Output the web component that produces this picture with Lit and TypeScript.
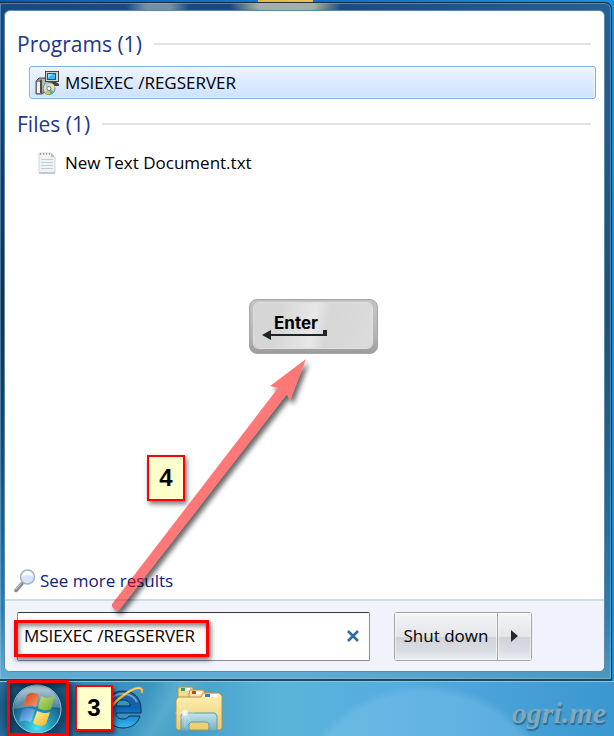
import { LitElement, html, css } from "lit";
import { customElement, property, state } from "lit/decorators.js";
import { classMap } from "lit/directives/class-map.js";

const installerIcon = html`<svg class="icon" width="24" height="24" viewBox="0 0 24 24" aria-hidden="true">
  <path d="M1 10l3-3h6v14l-3 2H1z" fill="#8c8c8c" stroke="#555" />
  <path d="M2 11h3v11H2z" fill="#f0f0f0" />
  <path d="M5 9h2v13H5z" fill="#4c4c4c" />
  <path d="M7 8h3v12H7z" fill="#b5b5b5" />
  <rect x="10.500" y=".5" width="13" height="10" fill="#d4d4cc" stroke="#43464a" />
  <rect x="12" y="2" width="9" height="7" fill="#1747b8" />
  <rect x="13" y="3" width="7" height="5" fill="#35b9f2" />
  <path d="M13 3h5l-5 4z" fill="#8be4ff" />
  <path d="M13 11h8l3 2v2h-5z" fill="#3f4348" />
  <circle cx="14" cy="17.500" r="6" fill="#d9dccb" stroke="#77797a" />
  <path d="M14 17.500l-5-3a6 6 0 0 1 4-3z" fill="#9fdcdc" />
  <path d="M14 17.500l5 3a6 6 0 0 1-4 3z" fill="#41b8bc" />
  <path d="M14 17.500l-4 4a6 6 0 0 0 4 2z" fill="#e6c233" />
  <path d="M14 17.500l3-5a6 6 0 0 1 3 4z" fill="#efe78c" />
  <circle cx="14" cy="17.500" r="2" fill="#fff" stroke="#777" />
</svg>`;

const textIcon = html`<svg class="icon" width="24" height="24" viewBox="0 0 24 24" aria-hidden="true">
  <path d="M4 2h12l4 4v16H4z" fill="#f0f2f4" stroke="#d3d6d9" />
  <path d="M16 2v4h4z" fill="#b9bdc0" />
  <path d="M6 8.500h12M6 11.500h12M6 14.500h12M6 17.500h12" stroke="#b9d0e2" />
  <path d="M5 3h10" stroke="#9b9fa2" stroke-width="2" stroke-dasharray="1 2" />
  <path d="M4 22h16" stroke="#a9adb1" />
</svg>`;

const lensIcon = html`<svg width="22" height="24" viewBox="0 0 22 24" aria-hidden="true">
  <path d="M2 21.500l6-7" stroke="#85898d" stroke-width="3.500" stroke-linecap="round" />
  <path d="M2 20.500l5-6" stroke="#d5d8dc" stroke-width="1" stroke-linecap="round" />
  <circle cx="13.500" cy="8" r="7" fill="#d3e6fb" stroke="#a9b2be" stroke-width="1.500" />
  <path d="M8 8a5.500 5.500 0 0 1 11-1c-4-1-8-1-11 1z" fill="#f6fbff" />
</svg>`;

const orbIcon = html`<svg width="52" height="52" viewBox="0 0 52 52" aria-hidden="true">
  <defs>
    <radialGradient id="orb" cx="50%" cy="88%" r="85%">
      <stop offset="0" stop-color="#4fe3ef" />
      <stop offset=".35" stop-color="#2299bd" />
      <stop offset=".7" stop-color="#1b5d85" />
      <stop offset="1" stop-color="#4a86a3" />
    </radialGradient>
    <linearGradient id="gloss" x2="0" y2="1">
      <stop offset="0" stop-color="#fff" stop-opacity=".65" />
      <stop offset="1" stop-color="#cfe6ee" stop-opacity=".25" />
    </linearGradient>
    <linearGradient id="fr" x2="1" y2="1"><stop offset="0" stop-color="#d63a12" /><stop offset="1" stop-color="#f7a06a" /></linearGradient>
    <linearGradient id="fg" x2="1" y2="1"><stop offset="0" stop-color="#c6e27a" /><stop offset="1" stop-color="#6cab2c" /></linearGradient>
    <linearGradient id="fb" x2="1" y2="1"><stop offset="0" stop-color="#2f6fc4" /><stop offset="1" stop-color="#8fd4f7" /></linearGradient>
    <linearGradient id="fy" x2="1" y2="1"><stop offset="0" stop-color="#fff0a0" /><stop offset="1" stop-color="#f3b51d" /></linearGradient>
  </defs>
  <circle cx="26" cy="26" r="25" fill="url(#orb)" stroke="#143f5c" />
  <circle cx="26" cy="26" r="24" fill="none" stroke="#a9dcea" stroke-opacity=".8" />
  <path d="M3 26a23 23 0 0 1 46-1c-16-3-31-2-46 1z" fill="url(#gloss)" />
  <path d="M16 12c4-3 8-2 12 0l-3 12c-4-2-8-2-13 0z" fill="url(#fr)" />
  <path d="M30 13c5 3 9 2 14-1l-4 14c-4 2-8 2-13-1z" fill="url(#fg)" />
  <path d="M11 27c5-3 9-2 13 0l-4 12c-4-2-8-2-12 0z" fill="url(#fb)" />
  <path d="M26 28c5 2 9 3 13 1l-4 12c-4 3-8 2-13-1z" fill="url(#fy)" />
</svg>`;

const browserIcon = html`<svg width="48" height="48" viewBox="0 0 48 48" aria-hidden="true">
  <defs>
    <linearGradient id="ie" x2="0" y2="1">
      <stop offset="0" stop-color="#2a5f9c" />
      <stop offset=".45" stop-color="#0b62b0" />
      <stop offset="1" stop-color="#35bdf2" />
    </linearGradient>
  </defs>
  <path d="M24 6C13 6 6 14 6 24.500S13 43 24 43c9 0 15-5 17-12H30c-1 2-3 3-6 3-4 0-7-2-7-6h25v-4C42 13 35 6 24 6zm-7 15c1-4 3-6 7-6s7 2 7 6z" fill="url(#ie)" stroke="#0a2f5c" />
  <path d="M10 16c4-6 11-8 17-7 5 1 9 4 11 8" fill="none" stroke="#a4cdea" stroke-opacity=".6" stroke-width="2" />
  <path d="M7 44c-7-6 3-24 18-34 9-7 19-10 18-3" fill="none" stroke="#f0b52a" stroke-width="2.500" stroke-linecap="round" />
  <path d="M24 10C33 4 42 1 43 5" fill="none" stroke="#ffe27a" />
</svg>`;

const folderIcon = html`<svg width="48" height="48" viewBox="0 0 48 48" aria-hidden="true">
  <defs>
    <linearGradient id="fo" x2="0" y2="1"><stop offset="0" stop-color="#fdf0b6" /><stop offset="1" stop-color="#eccb68" /></linearGradient>
    <linearGradient id="gl" x2="0" y2="1"><stop offset="0" stop-color="#bfe6f6" /><stop offset="1" stop-color="#5aabd6" /></linearGradient>
  </defs>
  <path d="M3 4l1-2h13l2 3h9v38H3z" fill="#f1dc92" stroke="#b5934a" />
  <rect x="6" y="3" width="9" height="3" fill="#fff" /><rect x="6" y="3" width="4" height="3" fill="#27a453" />
  <path d="M14 9l1-4h13l2 3h9v35H14z" fill="#f7e6a6" stroke="#b5934a" />
  <rect x="17" y="6" width="10" height="3" fill="#fff" /><rect x="17" y="6" width="4" height="3" fill="#dc3b22" />
  <path d="M1 15l2-3h23l2-4h16l3 3v32l-2 2H3l-2-2z" fill="url(#fo)" stroke="#b5934a" />
  <rect x="30" y="9" width="12" height="3" fill="#fff" /><rect x="30" y="9" width="5" height="3" fill="#2f7fd8" />
  <path d="M6 31l2-3h32l2 3v15h-8v-7l-2-2H16l-2 2v7H6z" fill="url(#gl)" fill-opacity=".85" stroke="#5a97b8" />
  <path d="M10 14v28M0 28h20M4 20l12 17M16 20L4 36" stroke="#fff" stroke-opacity=".35" />
  <circle cx="10" cy="28" r="3" fill="#fff" fill-opacity=".7" />
</svg>`;

/** Small numbered tag that marks one step of the walkthrough. */
@customElement("step-tag")
export class StepTag extends LitElement {
  @property({ type: Number }) step = 0;

  static styles = css`
    :host {
      box-sizing: border-box;
      display: grid;
      place-items: center;
      width: 38px;
      height: 46px;
      border: 2px solid #f00;
      background: #ffffcb;
      box-shadow: 2px 3px 5px rgba(0, 0, 0, 0.55);
      font: bold 24px/1 "Liberation Sans", Arial, sans-serif;
      color: #000;
    }
  `;

  render() {
    return html`${this.step}`;
  }
}

/** Keyboard keycap with the return arrow. */
@customElement("enter-key")
export class EnterKey extends LitElement {
  static styles = css`
    :host {
      display: block;
      box-sizing: border-box;
      width: 129px;
      height: 55px;
      padding: 3px 5px 5px 4px;
      border: 1px solid #a4a4a4;
      border-radius: 8px;
      background: linear-gradient(#c4c4c4, #b4b4b4 70%, #9c9c9c);
    }
    .cap {
      box-sizing: border-box;
      height: 100%;
      padding: 10px 0 0 8px;
      border-radius: 5px;
      background: linear-gradient(100deg, #d6d6d6 20%, #e8e8e8 50%, #d6d6d6 62%, #dcdcdc);
      box-shadow: 0 0 0 1px #e0e0e0;
      font: 700 17px/20px Inter, sans-serif;
      color: #000;
    }
    .name {
      display: block;
      padding-left: 12px;
    }
    .arrow {
      display: block;
      margin-top: -3px;
    }
  `;

  render() {
    return html`<div class="cap">
      <span class="name">Enter</span>
      <svg class="arrow" width="66" height="10" viewBox="0 0 66 10" aria-hidden="true">
        <path d="M0 5L9 0V4H61V0H65V6H9V10Z" fill="#1d2529" />
      </svg>
    </div>`;
  }
}

interface Result {
  name: string;
  icon: unknown;
  selected: boolean;
}

interface Group {
  title: string;
  items: Result[];
}

@customElement("app-root")
export class AppRoot extends LitElement {
  @state() private query = "MSIEXEC /REGSERVER";

  private groups: Group[] = [
    { title: "Programs", items: [{ name: "MSIEXEC /REGSERVER", icon: installerIcon, selected: true }] },
    { title: "Files", items: [{ name: "New Text Document.txt", icon: textIcon, selected: false }] },
  ];

  static styles = css`
    :host {
      position: relative;
      display: flex;
      flex-direction: column;
      box-sizing: border-box;
      min-height: 100vh;
      overflow: hidden;
      padding-top: 2px;
      background: linear-gradient(90deg, #0b57b8, #0f78d4 42%, #e9b53c 42%, #f0c050 51%, #0a70d0 51%, #1592e4);
      font: 17px/24px "Open Sans", "Noto Sans", sans-serif;
      color: #000;
    }
    * {
      box-sizing: border-box;
    }
    button,
    input {
      margin: 0;
      font: inherit;
      color: inherit;
    }
    .menu {
      flex: 1;
      display: flex;
      margin-right: 2px;
      padding: 7px 6px 7px 4px;
      border: 1px solid #1a2d40;
      border-left: 0;
      border-bottom: 2px solid #1d4660;
      border-radius: 0 7px 0 0;
      box-shadow: inset 0 0 0 1px rgba(150, 200, 230, 0.45);
      background:
        radial-gradient(ellipse 32px 12px at 158px 4px, rgba(150, 175, 185, 0.7) 40%, transparent),
        radial-gradient(ellipse 56px 14px at 286px 3px, rgba(185, 195, 165, 0.85) 50%, transparent),
        linear-gradient(90deg, transparent 50%, rgba(50, 125, 165, 0.45)),
        linear-gradient(#174a86, #143e70 20%, #0f3050 45%, #134268 60%, #1c6296 78%, #2780b8 90%, #62aed4);
    }
    .panel {
      flex: 1;
      display: flex;
      flex-direction: column;
      min-width: 0;
      border: 1px solid #5f88a4;
      border-radius: 6px;
      overflow: hidden;
      background: #fff;
    }
    .results {
      flex: 1;
      display: flex;
      flex-direction: column;
      padding: 13px 8px 6px 12px;
    }
    .heading {
      display: flex;
      align-items: center;
      gap: 12px;
      height: 40px;
      margin: 0 5px 0 0;
      font-size: 21px;
      font-weight: 400;
      color: #22378b;
    }
    .heading::after {
      content: "";
      flex: 1;
      height: 2px;
      background: #e2e2e2;
    }
    .list {
      margin: 0;
      padding: 2px 0 5px 12px;
      list-style: none;
    }
    .item {
      display: flex;
      align-items: center;
      gap: 6px;
      width: 100%;
      height: 33px;
      padding: 0 5px;
      border: 1px solid transparent;
      border-radius: 3px;
      background: none;
      text-align: left;
    }
    .item.selected {
      border-color: #84acdd;
      background: linear-gradient(#edf4fe, #cce2ff);
      box-shadow: inset 0 0 0 1px rgba(255, 255, 255, 0.5);
    }
    .more {
      display: flex;
      align-items: center;
      align-self: flex-start;
      gap: 4px;
      margin: auto 0 0 -3px;
      color: #0e2279;
      text-decoration: none;
    }
    .footer {
      display: flex;
      align-items: center;
      gap: 24px;
      height: 72px;
      padding: 0 72px 0 12px;
      border-top: 2px solid #cfdbea;
      background: #f0f3fb;
    }
    .search {
      position: relative;
      flex: 1;
      display: flex;
      min-width: 0;
      height: 49px;
      border: 1px solid #8b8f97;
      border-top: 1px solid #33363c;
      border-radius: 2px;
      background: #fff;
    }
    .query {
      flex: 1;
      min-width: 0;
      padding: 0 0 0 6px;
      border: 0;
      outline: 0;
      background: none;
    }
    .clear {
      display: grid;
      place-items: center;
      width: 32px;
      padding: 0;
      border: 0;
      background: none;
    }
    .power {
      display: flex;
      height: 49px;
      border: 1px solid #a0a3a8;
      border-radius: 3px;
      background: linear-gradient(#f3f4f6, #e3e5e8 50%, #d0d3d8 51%, #d9dce2 80%, #eceef3);
    }
    .shut,
    .options {
      padding: 0 8px;
      border: 0;
      background: none;
      box-shadow: inset 0 0 0 1px rgba(255, 255, 255, 0.6);
    }
    .shut {
      min-width: 102px;
    }
    .options {
      display: grid;
      place-items: center;
      width: 34px;
      border-left: 1px solid #a0a3a8;
    }
    .taskbar {
      position: relative;
      display: flex;
      align-items: center;
      height: 55px;
      padding: 0 8px 0 11px;
      border-top: 1px solid #8cc4e0;
      background:
        radial-gradient(circle at 38px 28px, rgba(8, 50, 85, 0.8) 24px, transparent 52px),
        radial-gradient(circle 150px at 425px 140px, rgba(150, 205, 240, 0.28) 86%, transparent 92%),
        linear-gradient(120deg, transparent 24%, rgba(140, 215, 225, 0.3) 28%, transparent 33%),
        linear-gradient(90deg, #2f7db0, #3c97c4 25%, #5ab4da 45%, #54ace0 65%, #3a97cf);
    }
    .task {
      display: grid;
      place-items: center;
      padding: 0;
      border: 0;
      background: none;
    }
    .browser {
      margin-left: 36px;
    }
    .explorer {
      margin-left: 28px;
    }
    .mark {
      margin-left: auto;
      padding-top: 8px;
      font: italic bold 30px/32px "Liberation Serif", serif;
      color: #7fa9c0;
      text-shadow: 1px 2px 1px #2c6b91;
    }
    .frame {
      position: absolute;
      border: 3px solid #f00;
      box-shadow: 2px 3px 5px rgba(0, 0, 0, 0.55), inset 2px 3px 5px rgba(0, 0, 0, 0.5);
      pointer-events: none;
    }
    .frame.typed {
      left: -4px;
      top: 7px;
      width: 195px;
      height: 37px;
    }
    .frame.start {
      left: 7px;
      top: -2px;
      width: 62px;
      height: 56px;
    }
    .third {
      position: absolute;
      left: 75px;
      bottom: 5px;
    }
    .fourth {
      position: absolute;
      left: 147px;
      bottom: 235px;
    }
    .key {
      position: absolute;
      left: 249px;
      bottom: 382px;
    }
    .pointer {
      position: absolute;
      left: 100px;
      bottom: 116px;
      pointer-events: none;
    }
  `;

  private onInput(e: Event) {
    this.query = (e.target as HTMLInputElement).value;
  }

  private clear() {
    this.query = "";
  }

  private renderGroup(group: Group) {
    return html`<section>
      <h2 class="heading">${group.title} (${group.items.length})</h2>
      <ul class="list">
        ${group.items.map(
          (item) => html`<li>
            <button class=${classMap({ item: true, selected: item.selected })}>${item.icon}<span>${item.name}</span></button>
          </li>`,
        )}
      </ul>
    </section>`;
  }

  render() {
    return html`
      <main class="menu">
        <div class="panel">
          <div class="results">
            ${this.groups.map((g) => this.renderGroup(g))}
            <a class="more" href="#results">${lensIcon}<span>See more results</span></a>
          </div>
          <div class="footer">
            <div class="search">
              <input class="query" type="text" aria-label="Search programs and files" .value=${this.query} @input=${this.onInput} />
              <button class="clear" aria-label="Clear search" @click=${this.clear}>
                <svg width="12" height="12" viewBox="0 0 12 12" aria-hidden="true">
                  <path d="M1 1l10 10M11 1L1 11" stroke="#2c6ba6" stroke-width="2.500" />
                </svg>
              </button>
              <div class="frame typed"></div>
            </div>
            <div class="power">
              <button class="shut">Shut down</button>
              <button class="options" aria-label="Shut down options">
                <svg width="7" height="12" viewBox="0 0 7 12" aria-hidden="true"><path d="M0 0l7 6-7 6z" fill="#26282c" /></svg>
              </button>
            </div>
          </div>
        </div>
      </main>
      <nav class="taskbar" aria-label="Taskbar">
        <button class="task" aria-label="Start">${orbIcon}</button>
        <button class="task browser" aria-label="Internet Explorer">${browserIcon}</button>
        <button class="task explorer" aria-label="Windows Explorer">${folderIcon}</button>
        <span class="mark">ogri.me</span>
        <div class="frame start"></div>
        <step-tag class="third" step="3"></step-tag>
      </nav>
      <step-tag class="fourth" step="4"></step-tag>
      <enter-key class="key"></enter-key>
      <svg class="pointer" width="220" height="270" viewBox="0 0 220 270" aria-hidden="true">
        <defs>
          <filter id="cast" x="-10%" y="-10%" width="120%" height="120%">
            <feOffset in="SourceAlpha" dx="3" dy="4" />
            <feGaussianBlur stdDeviation="2.500" />
            <feComposite in2="SourceAlpha" operator="out" />
            <feComponentTransfer><feFuncA type="linear" slope=".6" /></feComponentTransfer>
          </filter>
        </defs>
        <path d="M206 9L190 51L187 44L20 259A5 5 0 0 1 12 254L178 38L170 36Z" filter="url(#cast)" />
        <path d="M206 9L190 51L187 44L20 259A5 5 0 0 1 12 254L178 38L170 36Z" fill="#f00" fill-opacity=".53" />
      </svg>
    `;
  }
}
